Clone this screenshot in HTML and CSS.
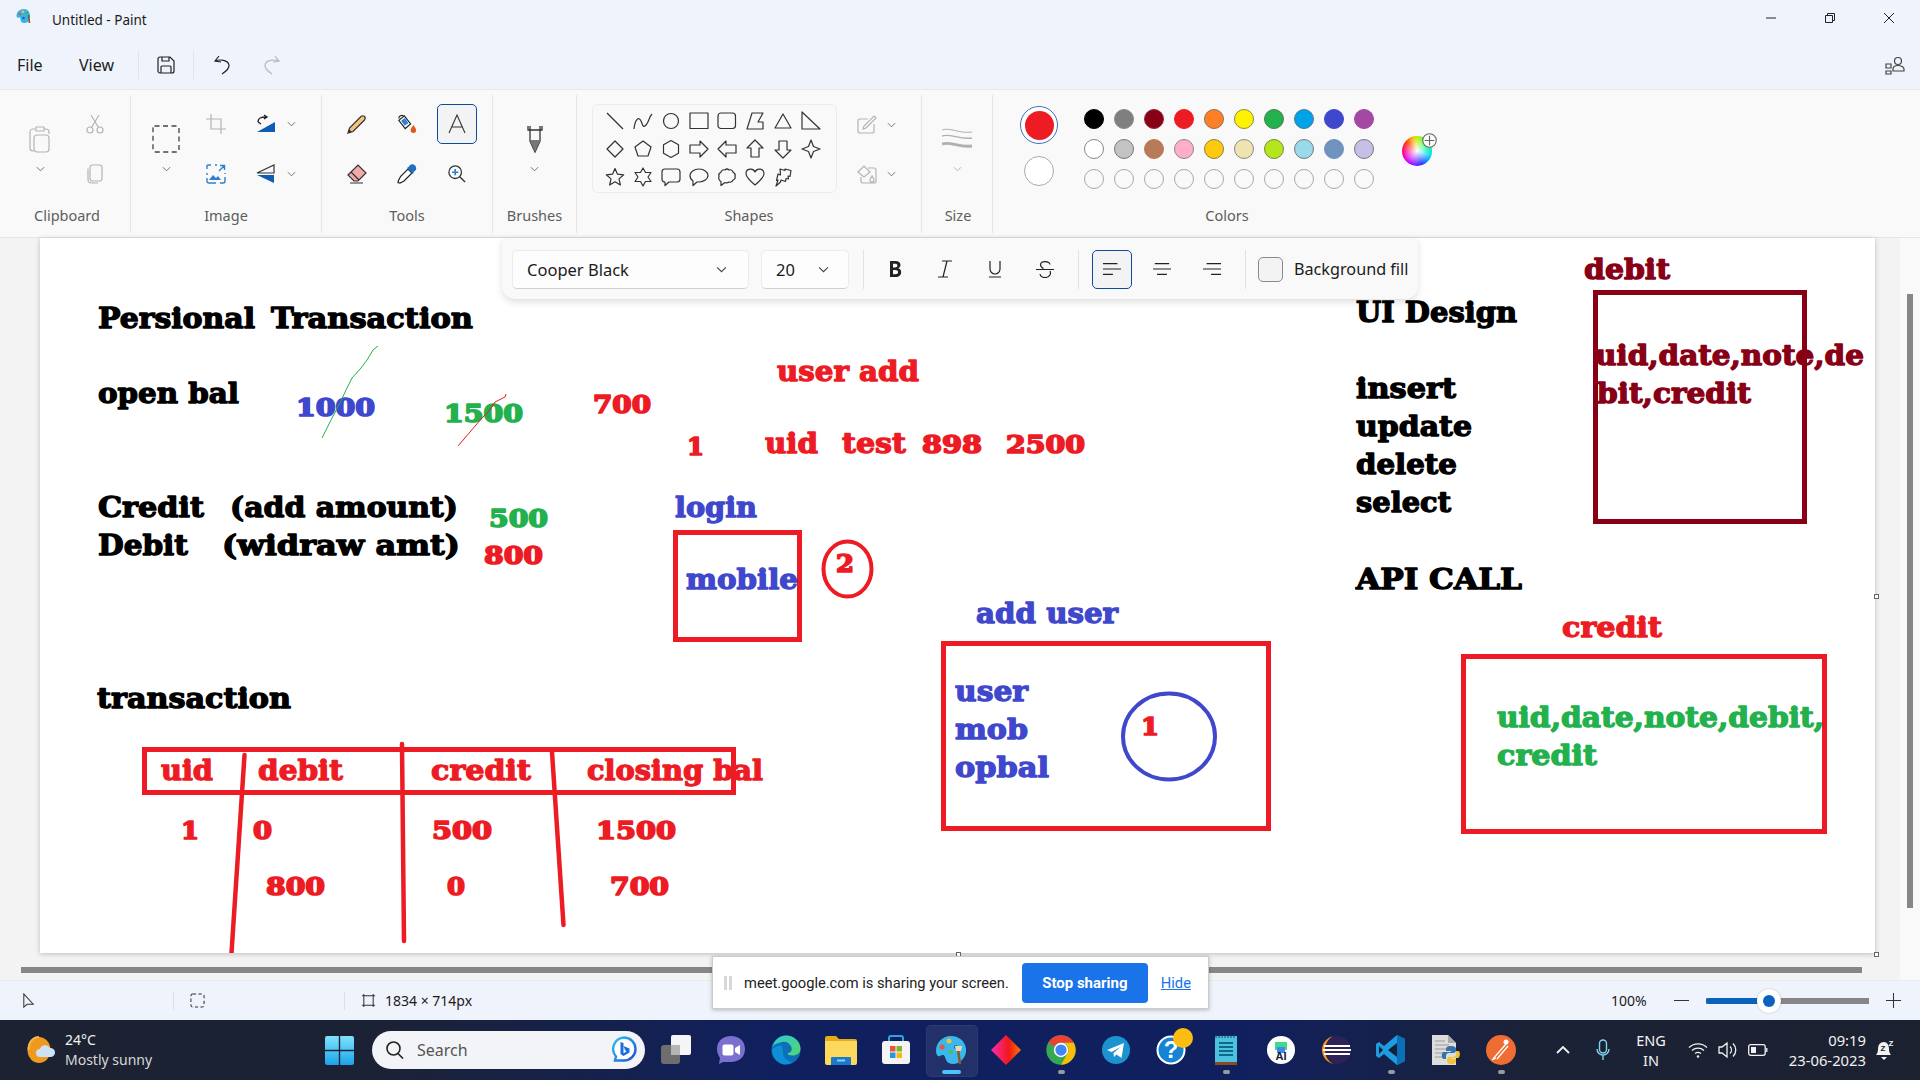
FILE: index.html
```html
<!DOCTYPE html>
<html lang="en">
<head>
<meta charset="utf-8">
<title>Untitled - Paint</title>
<link rel="stylesheet" href="styles.css">
</head>
<body>
<div class="app">
  <header class="titlebar">
    <svg class="applogo" viewBox="0 0 16 16"><path d="M8 1C3.500 1 .5 4 .5 8c0 1.500 1.500 2 2.500 1.500S4.500 10 4.500 11.500 5.500 15 8 15c3 0 5.500-2 6-5 .5-3-.5-9-6-9z" fill="#35b4e8"/><circle cx="4" cy="6" r="1.300" fill="#e8543a"/><circle cx="7" cy="3.800" r="1.300" fill="#f2c230"/><circle cx="11" cy="5" r="1.300" fill="#4caf50"/><circle cx="7.500" cy="10" r="1.300" fill="#2a5fb0"/><path d="M12.500 7l1 8" stroke="#8a5a2b" stroke-width="1.600"/></svg>
    <span class="apptitle">Untitled - Paint</span>
    <div class="winbtns">
      <svg class="winbtn" viewBox="0 0 12 12"><path d="M1 6h10"/></svg>
      <svg class="winbtn" viewBox="0 0 12 12"><path d="M1.500 3.500h7v7h-7zM3.500 3.500v-2h7v7h-2"/></svg>
      <svg class="winbtn" viewBox="0 0 12 12"><path d="M1 1l10 10M11 1L1 11"/></svg>
    </div>
  </header>
  <nav class="menubar">
    <span class="menu file">File</span>
    <span class="menu view">View</span>
    <i class="mbsep"></i>
    <svg class="mbicon save" viewBox="0 0 18 18"><path d="M1 3a2 2 0 0 1 2-2h10l4 4v10a2 2 0 0 1-2 2H3a2 2 0 0 1-2-2zM5 1v4h7V1M4 17v-6a1 1 0 0 1 1-1h8a1 1 0 0 1 1 1v6"/></svg>
    <i class="mbsep"></i>
    <svg class="mbicon undo" viewBox="0 0 18 20"><path d="M6 1L2 6l6 1M2 6c5-2 13-1 14 4 .5 3-4 7-7 9"/></svg>
    <svg class="mbicon redo" viewBox="0 0 18 20"><path d="M12 1l4 5-6 1M16 6C11 4 3 5 2 10c-.5 3 4 7 7 9"/></svg>
    <svg class="share" viewBox="0 0 20 20"><circle cx="13" cy="6" r="3.500"/><path d="M8 14c0-2 2-3.500 5-3.500s6 1.500 6 3.500v2H8zM1 9h5v4H1zM1 16h5v3H1z"/></svg>
  </nav>
  <section class="ribbon">
    <div class="group g-clip">
      <div class="gbody">
        <div class="stack rs2">
          <svg class="ic i22-28 dim" viewBox="0 0 22 28"><path d="M6 4H4a3 3 0 0 0-3 3v16a3 3 0 0 0 3 3h1M7 2h8v4H7zM15 4h2a3 3 0 0 1 3 3v2M8 10h9a3 3 0 0 1 3 3v11a3 3 0 0 1-3 3H8a3 3 0 0 1-3-3V13a3 3 0 0 1 3-3z"/></svg>
          <svg class="chev" viewBox="0 0 10 6"><path d="M1 1l4 4 4-4"/></svg>
        </div>
        <div class="cell"><svg class="ic dim i20" viewBox="0 0 20 20"><circle cx="5" cy="16" r="3"/><circle cx="15" cy="16" r="3"/><path d="M6.500 13.500L14 1M13.500 13.500L6 1"/></svg></div>
        <div class="cell"><svg class="ic dim i20" viewBox="0 0 20 20"><rect x="5" y="1" width="12" height="16" rx="2.500"/><path d="M3 4.500v11A3.500 3.500 0 0 0 6.500 19H13"/></svg></div>
      </div>
      <div class="glabel">Clipboard</div>
    </div>
    <div class="group g-image">
      <div class="gbody">
        <div class="stack rs2">
          <svg class="ic sel28" viewBox="0 0 28 28"><rect x="1" y="1" width="26" height="26" rx="1.500" stroke-dasharray="5 3.500"/></svg>
          <svg class="chev" viewBox="0 0 10 6"><path d="M1 1l4 4 4-4"/></svg>
        </div>
        <div class="cell"><svg class="ic dim i20" viewBox="0 0 20 20"><path d="M5 0v15h15M0 5h15v15"/></svg></div>
        <div class="cell wide"><svg class="i20" viewBox="0 0 20 20"><path d="M19 18H1L19 8z" fill="#0f5cb4"/><path d="M2 8c0-4 3-5 8-5M8 1l3 2-3 2M2 8l3 2" fill="none" stroke="#222" stroke-width="1.400"/></svg><svg class="chev side" viewBox="0 0 10 6"><path d="M1 1l4 4 4-4"/></svg></div>
        <div class="cell"><svg class="i20" viewBox="0 0 20 20"><path d="M1 5V2q0-1 1-1h3M9 1h2M1 9v2M19 13v4q0 2-2 2h-3M10 19H3q-2 0-2-2v-3M19 9v1M13 7l5-5M14 1.500h4.500V6" fill="none" stroke="#2f7fd0" stroke-width="1.400"/><path d="M3 16l4-5 3 3 2-2 3 4z" fill="#2f7fd0"/></svg></div>
        <div class="cell wide"><svg class="i20" viewBox="0 0 20 20"><path d="M18 9H1L18 1z" fill="none" stroke="#333" stroke-width="1.200"/><path d="M18 11H1l17 8z" fill="#0f5cb4"/></svg><svg class="chev side" viewBox="0 0 10 6"><path d="M1 1l4 4 4-4"/></svg></div>
      </div>
      <div class="glabel">Image</div>
    </div>
    <div class="group g-tools">
      <div class="gbody">
        <div class="cell"><svg class="i20" viewBox="0 0 20 20"><path d="M1 19l1.500-5L14 2.500q2-1.500 3.500 0t0 3.500L6 17.500z" fill="#f2c57c" stroke="#333" stroke-width="1.200"/><path d="M1 19l1.200-3.800 2.600 2.600z" fill="#333"/></svg></div>
        <div class="cell"><svg class="i20" viewBox="0 0 22 22"><path d="M2 7l6-5 7 9-6 5z" fill="#fff" stroke="#222" stroke-width="1.300"/><path d="M4.500 7.500l4-3 4 5.500-4 3z" fill="#2f7fd0"/><path d="M2 5c0-3 3-4 5-3" fill="none" stroke="#222" stroke-width="1.300"/><path d="M18 12c2 3 3 4 3 6a3 3 0 0 1-6 0c0-2 1-3 3-6z" fill="#e2571e"/></svg></div>
        <div class="cell selected"><svg class="glyphA" viewBox="0 0 20 20"><path d="M2 19L10 1l8 18M5 13h10"/></svg></div>
        <div class="cell"><svg class="i20" viewBox="0 0 20 20"><path d="M1 11L11 1l8 8-8 8H7z" fill="#f2a9a9" stroke="#333" stroke-width="1.200"/><path d="M4 8l8 8M3 19h13" fill="none" stroke="#333" stroke-width="1.200"/></svg></div>
        <div class="cell"><svg class="i20" viewBox="0 0 20 20"><path d="M11 5l4 4-8 8-4 2-2-.5.500-2 2-4z" fill="#fff" stroke="#222" stroke-width="1.200"/><path d="M10 4l6 6 1-2.500 1-.5q2.500-3 0-5.500t-5.500 0l-.5 1z" fill="#1f6fc4"/></svg></div>
        <div class="cell"><svg class="i20 sm" viewBox="0 0 20 20"><circle cx="8" cy="8" r="7" fill="none" stroke="#333" stroke-width="1.400"/><path d="M13 13l6 6" stroke="#333" stroke-width="1.500"/><path d="M8 4.500v7M4.500 8h7" stroke="#2f7fd0" stroke-width="1.800"/></svg></div>
      </div>
      <div class="glabel">Tools</div>
    </div>
    <div class="group g-brushes">
      <div class="gbody">
        <div class="stack">
          <svg class="brush" viewBox="0 0 16 28"><path d="M1 1v4h14V1M3 1v4M13 1v4M3 5v11l5 11 5-11V5" fill="none" stroke="#333" stroke-width="1.300"/><path d="M3 15h10v1l-5 11-5-11z" fill="#777"/></svg>
          <svg class="chev" viewBox="0 0 10 6"><path d="M1 1l4 4 4-4"/></svg>
        </div>
      </div>
      <div class="glabel">Brushes</div>
    </div>
    <div class="group g-shapes">
      <div class="gbody">
        <div class="shapebox">
          <svg class="shape" viewBox="0 0 20 20"><path d="M2 2l16 16"/></svg>
          <svg class="shape" viewBox="0 0 20 20"><path d="M1 18C2 8 6 5 8 10s2 7 5 4 3-8 6-11"/></svg>
          <svg class="shape" viewBox="0 0 20 20"><circle cx="10" cy="10" r="7.500"/></svg>
          <svg class="shape" viewBox="0 0 20 20"><rect x="1" y="2" width="18" height="15.500"/></svg>
          <svg class="shape" viewBox="0 0 20 20"><rect x="1" y="2" width="17.500" height="15.500" rx="3"/></svg>
          <svg class="shape" viewBox="0 0 20 20"><path d="M2 18L7 2h11l-5 9h5v7z"/></svg>
          <svg class="shape" viewBox="0 0 20 20"><path d="M10 3l8 14H2z"/></svg>
          <svg class="shape" viewBox="0 0 20 20"><path d="M1 1v17h18z"/></svg>
          <svg class="shape" viewBox="0 0 20 20"><path d="M10 2l8 8-8 8-8-8z"/></svg>
          <svg class="shape" viewBox="0 0 20 20"><path d="M10 2l8 6-3 9H5L2 8z"/></svg>
          <svg class="shape" viewBox="0 0 20 20"><path d="M10 1.500l7.500 4.300v8.400L10 18.500l-7.500-4.300V5.800z"/></svg>
          <svg class="shape" viewBox="0 0 20 20"><path d="M1 6h10V2l8 8-8 8v-4H1z"/></svg>
          <svg class="shape" viewBox="0 0 20 20"><path d="M19 6H9V2l-8 8 8 8v-4h10z"/></svg>
          <svg class="shape" viewBox="0 0 20 20"><path d="M10 1l8 8h-4v9H6V9H2z"/></svg>
          <svg class="shape" viewBox="0 0 20 20"><path d="M6 2h8v9h4l-8 8-8-8h4z"/></svg>
          <svg class="shape" viewBox="0 0 20 20"><path d="M10 1l2.500 6.500L19 10l-6.500 2.500L10 19l-2.500-6.500L1 10l6.500-2.500z"/></svg>
          <svg class="shape" viewBox="0 0 20 20"><path d="M10 1.500l2.500 5.700 6.200.6-4.700 4.100 1.400 6.100-5.400-3.200L4.600 18l1.400-6.100L1.300 7.800l6.200-.6z"/></svg>
          <svg class="shape" viewBox="0 0 20 20"><path d="M10 1l2.500 4.500H18L15 10l3 4.500h-5.500L10 19l-2.500-4.500H2L5 10 2 5.500h5.500z"/></svg>
          <svg class="shape" viewBox="0 0 20 20"><path d="M4 2h12q3 0 3 3v7q0 3-3 3H8l-4 3.500V15q-3 0-3-3V5q0-3 3-3z"/></svg>
          <svg class="shape" viewBox="0 0 20 20"><path d="M10 2c5 0 9 3 9 6.500S15 15 10 15H8l-4 3.500V14Q1 12 1 8.500C1 5 5 2 10 2z"/></svg>
          <svg class="shape" viewBox="0 0 20 20"><path d="M4 5q1-3 4-2 2-2 4 0 3-1 4 2 3 2 2 4 1 3-2 4-1 3-4 2-2 1.500-4 .5l-4 3v-4Q1 13 2 9 1 7 4 5z"/></svg>
          <svg class="shape" viewBox="0 0 20 20"><path d="M10 18C4 13 1 10 1 6.500 1 1.500 8 .5 10 5c2-4.500 9-3.500 9 1.500C19 10 16 13 10 18z"/></svg>
          <svg class="shape" viewBox="0 0 20 20"><path d="M7 2l5 1.500L12 2l6 1.500-1 6-2-.5.500 3-2.500-.5-.5 3L8 13l-.5 2L3 19l2-6-1.500.5L5 7l2.500 1z"/></svg>
        </div>
        <div class="shapeopts">
          <div class="optrow"><svg class="ic dim i20" viewBox="0 0 20 20"><path d="M17 9v7q0 2-2 2H3q-2 0-2-2V6q0-2 2-2h8M19 3L9 13l-3 1 1-3L17 1z"/></svg><svg class="chev side" viewBox="0 0 10 6"><path d="M1 1l4 4 4-4"/></svg></div>
          <div class="optrow"><svg class="ic dim i20" viewBox="0 0 20 20"><path d="M11 4h6q2 0 2 2v11q0 2-2 2H6q-2 0-2-2v-4M1 8l6-6 6 6-6 5zM15 12c1 2 2 3 2 4a2 2 0 0 1-4 0c0-1 1-2 2-4z"/></svg><svg class="chev side" viewBox="0 0 10 6"><path d="M1 1l4 4 4-4"/></svg></div>
        </div>
      </div>
      <div class="glabel">Shapes</div>
    </div>
    <div class="group g-size">
      <div class="gbody">
        <div class="stack">
          <svg class="sizeicon" viewBox="0 0 30 22"><path d="M0 2c8-3 18 4 30 2" stroke-width="1"/><path d="M0 8c8-3 18 4 30 2" stroke-width="1.500"/><path d="M0 16c8-3 18 4 30 2" stroke-width="3"/></svg>
          <svg class="chev" viewBox="0 0 10 6"><path d="M1 1l4 4 4-4"/></svg>
        </div>
      </div>
      <div class="glabel">Size</div>
    </div>
    <div class="group g-colors">
      <div class="gbody">
        <div class="actives">
          <div class="ring"><i class="primary"></i></div>
          <i class="secondary"></i>
        </div>
        <div class="palette">
          <i class="sw c1"></i><i class="sw c2"></i><i class="sw c3"></i><i class="sw c4"></i><i class="sw c5"></i><i class="sw c6"></i><i class="sw c7"></i><i class="sw c8"></i><i class="sw c9"></i><i class="sw c10"></i>
          <i class="sw c11"></i><i class="sw c12"></i><i class="sw c13"></i><i class="sw c14"></i><i class="sw c15"></i><i class="sw c16"></i><i class="sw c17"></i><i class="sw c18"></i><i class="sw c19"></i><i class="sw c20"></i>
          <i class="sw"></i><i class="sw"></i><i class="sw"></i><i class="sw"></i><i class="sw"></i><i class="sw"></i><i class="sw"></i><i class="sw"></i><i class="sw"></i><i class="sw"></i>
        </div>
        <div class="wheel"><svg class="wheelplus" viewBox="0 0 14 14"><circle cx="7" cy="7" r="6.300"/><path d="M7 2.500v9M2.500 7h9"/></svg></div>
      </div>
      <div class="glabel">Colors</div>
    </div>
  </section>
  <main class="workspace">
    <div class="leftpane">
      <div class="canvas">
        <svg class="drawing" viewBox="40 238 1835 715" width="1835" height="715">
          <text class="t k" x="98" y="327.500" textLength="157" lengthAdjust="spacingAndGlyphs">Persional</text>
          <text class="t k" x="271" y="327.500" textLength="202" lengthAdjust="spacingAndGlyphs">Transaction</text>
          <text class="t k" x="98" y="403" textLength="141" lengthAdjust="spacingAndGlyphs">open bal</text>
          <text class="t b n" x="296" y="416" textLength="79" lengthAdjust="spacingAndGlyphs">1000</text>
          <text class="t g n" x="444" y="422" textLength="79" lengthAdjust="spacingAndGlyphs">1500</text>
          <text class="t r n" x="593" y="413" textLength="58" lengthAdjust="spacingAndGlyphs">700</text>
          <text class="t k" x="98" y="517" textLength="106" lengthAdjust="spacingAndGlyphs">Credit</text>
          <text class="t k" x="230" y="517" textLength="228" lengthAdjust="spacingAndGlyphs">(add amount)</text>
          <text class="t k" x="98" y="555" textLength="90" lengthAdjust="spacingAndGlyphs">Debit</text>
          <text class="t k" x="222" y="555" textLength="238" lengthAdjust="spacingAndGlyphs">(widraw amt)</text>
          <text class="t g n" x="489" y="527" textLength="59" lengthAdjust="spacingAndGlyphs">500</text>
          <text class="t r n" x="484" y="564" textLength="59" lengthAdjust="spacingAndGlyphs">800</text>
          <path class="thin gs" d="M378 346L373 350 367 360 361 368 352 378 346 390 340 403 331 420 322 438"/>
          <path class="thin rs" d="M506 394L505 397 495 402 489 411 482 418 470 432 458 446"/>

          <text class="t r" x="777" y="381" textLength="142" lengthAdjust="spacingAndGlyphs">user add</text>
          <text class="t r n" x="687" y="455" textLength="17" lengthAdjust="spacingAndGlyphs">1</text>
          <text class="t r" x="765" y="453" textLength="53" lengthAdjust="spacingAndGlyphs">uid</text>
          <text class="t r" x="842" y="453" textLength="64" lengthAdjust="spacingAndGlyphs">test</text>
          <text class="t r n" x="922" y="453" textLength="60" lengthAdjust="spacingAndGlyphs">898</text>
          <text class="t r n" x="1006" y="453" textLength="79" lengthAdjust="spacingAndGlyphs">2500</text>
          <text class="t b" x="675" y="517" textLength="82" lengthAdjust="spacingAndGlyphs">login</text>
          <rect class="box rs" x="675.500" y="532.500" width="124" height="107"/>
          <text class="t b" x="686" y="589" textLength="112" lengthAdjust="spacingAndGlyphs">mobile</text>
          <ellipse class="oval rs" cx="847.500" cy="569" rx="24" ry="27.500"/>
          <text class="t r n" x="836" y="572" textLength="18" lengthAdjust="spacingAndGlyphs">2</text>
          <text class="t b" x="976" y="623" textLength="142" lengthAdjust="spacingAndGlyphs">add user</text>

          <rect class="box rs" x="943.500" y="643.500" width="325" height="185"/>
          <text class="t b" x="955" y="701" textLength="73" lengthAdjust="spacingAndGlyphs">user</text>
          <text class="t b" x="955" y="739" textLength="73" lengthAdjust="spacingAndGlyphs">mob</text>
          <text class="t b" x="955" y="777" textLength="94" lengthAdjust="spacingAndGlyphs">opbal</text>
          <ellipse class="oval bs" cx="1169" cy="736.500" rx="46" ry="43"/>
          <text class="t r n" x="1141" y="735" textLength="18" lengthAdjust="spacingAndGlyphs">1</text>

          <rect class="box rs" x="1463.500" y="656.500" width="361" height="175"/>
          <text class="t r" x="1562" y="637" textLength="100" lengthAdjust="spacingAndGlyphs">credit</text>
          <text class="t g" x="1497" y="727" textLength="327" lengthAdjust="spacingAndGlyphs">uid,date,note,debit,</text>
          <text class="t g" x="1497" y="765" textLength="100" lengthAdjust="spacingAndGlyphs">credit</text>

          <text class="t d" x="1584" y="279" textLength="86" lengthAdjust="spacingAndGlyphs">debit</text>
          <rect class="box ds" x="1595.500" y="292.500" width="209" height="229"/>
          <text class="t d" x="1595" y="365" textLength="269" lengthAdjust="spacingAndGlyphs">uid,date,note,de</text>
          <text class="t d" x="1597" y="403" textLength="154" lengthAdjust="spacingAndGlyphs">bit,credit</text>

          <text class="t k" x="1356" y="322" textLength="161" lengthAdjust="spacingAndGlyphs">UI Design</text>
          <text class="t k" x="1356" y="398" textLength="100" lengthAdjust="spacingAndGlyphs">insert</text>
          <text class="t k" x="1356" y="436" textLength="116" lengthAdjust="spacingAndGlyphs">update</text>
          <text class="t k" x="1356" y="474" textLength="101" lengthAdjust="spacingAndGlyphs">delete</text>
          <text class="t k" x="1356" y="512" textLength="95" lengthAdjust="spacingAndGlyphs">select</text>
          <text class="t k" x="1356" y="589" textLength="166" lengthAdjust="spacingAndGlyphs">API CALL</text>

          <text class="t k" x="97" y="708" textLength="194" lengthAdjust="spacingAndGlyphs">transaction</text>
          <rect class="box rs" x="144.500" y="749.500" width="589" height="43"/>
          <text class="t r" x="161" y="780" textLength="52" lengthAdjust="spacingAndGlyphs">uid</text>
          <text class="t r" x="258" y="780" textLength="85" lengthAdjust="spacingAndGlyphs">debit</text>
          <text class="t r" x="431" y="780" textLength="100" lengthAdjust="spacingAndGlyphs">credit</text>
          <text class="t r" x="587" y="780" textLength="176" lengthAdjust="spacingAndGlyphs">closing bal</text>
          <path class="rule rs" d="M244.500 755L231.500 953"/>
          <path class="rule rs" d="M402 744L404 941"/>
          <path class="rule rs" d="M552 752L563.500 925"/>
          <text class="t r n" x="181" y="838.500" textLength="18" lengthAdjust="spacingAndGlyphs">1</text>
          <text class="t r n" x="253" y="838.500" textLength="19" lengthAdjust="spacingAndGlyphs">0</text>
          <text class="t r n" x="432" y="838.500" textLength="60" lengthAdjust="spacingAndGlyphs">500</text>
          <text class="t r n" x="596" y="838.500" textLength="80" lengthAdjust="spacingAndGlyphs">1500</text>
          <text class="t r n" x="266" y="895" textLength="59" lengthAdjust="spacingAndGlyphs">800</text>
          <text class="t r n" x="447" y="895" textLength="18" lengthAdjust="spacingAndGlyphs">0</text>
          <text class="t r n" x="610" y="895" textLength="59" lengthAdjust="spacingAndGlyphs">700</text>
        </svg>
        <i class="handle h-right"></i>
        <i class="handle h-bottom"></i>
        <i class="handle h-corner"></i>
      </div>
      <div class="hscroll"></div>
    </div>
    <div class="rightpane"><div class="vscroll"></div></div>

    <div class="textbar">
      <div class="select fontsel"><span>Cooper Black</span><svg class="chev dark" viewBox="0 0 10 6"><path d="M1 1l4 4 4-4"/></svg></div>
      <div class="select sizesel"><span>20</span><svg class="chev dark" viewBox="0 0 10 6"><path d="M1 1l4 4 4-4"/></svg></div>
      <i class="tbsep"></i>
      <div class="tbbtn"><svg class="tbi" viewBox="0 0 16 18"><path class="solid" d="M3 1h5.500c3 0 5 1.300 5 4 0 1.600-1 2.800-2.300 3.300 1.800.4 3 1.800 3 3.700 0 3-2.300 5-5.500 5H3zM6 3.700v3.700h2c1.500 0 2.400-.7 2.400-1.900S9.500 3.700 8 3.700zM6 10v4.300h2.300c1.800 0 2.800-.8 2.800-2.200S10 10 8.200 10z"/></svg></div>
      <div class="tbbtn"><svg class="tbi" viewBox="0 0 16 18"><path d="M5 1h10M1 17h10M10 1L6 17"/></svg></div>
      <div class="tbbtn"><svg class="tbi" viewBox="0 0 16 18"><path d="M3 1v8a5 5 0 0 0 10 0V1M2 17h12"/></svg></div>
      <div class="tbbtn"><svg class="tbi" viewBox="0 0 18 18"><path d="M14 4.500C13.500 1 4.500.5 4.500 4.500c0 1.500 1 3 3 4M0 9.500h18M14 11c1 2 .5 6.500-5 6.500-3 0-4.500-1-5-3.500"/></svg></div>
      <i class="tbsep"></i>
      <div class="tbbtn active"><svg class="tbi" viewBox="0 0 20 14"><path d="M0 1h16M0 7h20M0 13h11"/></svg></div>
      <div class="tbbtn"><svg class="tbi" viewBox="0 0 20 14"><path d="M2 1h16M0 7h20M4.500 13h11"/></svg></div>
      <div class="tbbtn"><svg class="tbi" viewBox="0 0 20 14"><path d="M4 1h16M0 7h20M9 13h11"/></svg></div>
      <i class="tbsep"></i>
      <i class="checkbox"></i>
      <span class="bgfill">Background fill</span>
    </div>

    <div class="sharebar">
      <i class="grip"></i>
      <span class="sharetext">meet.google.com is sharing your screen.</span>
      <span class="stopbtn">Stop sharing</span>
      <span class="hidelink">Hide</span>
    </div>
  </main>
  <footer class="statusbar">
    <div class="stsec s1"><svg class="sti" viewBox="0 0 12 16"><path d="M1 1v14l3.500-3H11z"/></svg></div>
    <div class="stsec s2"><svg class="sti" viewBox="0 0 16 16"><rect x="1" y="1" width="14" height="14" rx="2" stroke-dasharray="3.500 2.500"/></svg></div>
    <div class="stsec s3"><svg class="sti" viewBox="0 0 16 16"><path d="M3 1v14M13 1v14M1 3h14M1 13h14"/></svg><span>1834 × 714px</span></div>
    <div class="zoomctl">
      <span class="zoompct">100%</span>
      <svg class="zbtn zminus" viewBox="0 0 16 16"><path d="M0 8h16"/></svg>
      <div class="slider"><i class="track"></i><i class="knob"></i></div>
      <svg class="zbtn zplus" viewBox="0 0 16 16"><path d="M0 8h16M8 0v16"/></svg>
    </div>
  </footer>
  <div class="taskbar">
    <div class="weather">
      <svg class="wicon" viewBox="0 0 28 28"><ellipse cx="12" cy="14" rx="11.500" ry="13" fill="#ee9a1e"/><path d="M1.500 14C1.500 6 6 1 12 1" fill="none" stroke="#f5b84a" stroke-width="2"/><path d="M13 21a4 4 0 0 1 0-8 5.500 5.500 0 0 1 10-1 4.500 4.500 0 0 1 1 9z" fill="#cfe1f5"/></svg>
      <div class="wtext"><div class="wtemp">24°C</div><div class="wdesc">Mostly sunny</div></div>
    </div>
    <div class="startcell"><svg class="winlogo" viewBox="0 0 29 29"><defs><linearGradient id="wl" x1="0" y1="0" x2="0" y2="1"><stop offset="0" stop-color="#7fe3fb"/><stop offset="1" stop-color="#1aa3ea"/></linearGradient></defs><path fill="url(#wl)" d="M0 2q0-2 2-2h11.800v13.800H0zM15.200 0H27q2 0 2 2v11.800H15.200zM0 15.200h13.800V29H2q-2 0-2-2zM15.200 15.200H29V27q0 2-2 2H15.200z"/></svg></div>
    <div class="search">
      <svg class="searchi" viewBox="0 0 18 18"><circle cx="7.500" cy="7.500" r="6.500"/><path d="M12 12.500l5 5"/></svg>
      <span>Search</span>
      <svg class="bing" viewBox="0 0 26 28"><defs><linearGradient id="bg1" x1="0" y1="0" x2="1" y2="1"><stop offset="0" stop-color="#36c3f0"/><stop offset="1" stop-color="#1b4fd8"/></linearGradient></defs><path d="M13 1.500A11.500 11.500 0 0 1 13 24.500H4l1-4A11.500 11.500 0 0 1 13 1.500z" fill="#fff" stroke="url(#bg1)" stroke-width="2.400"/><path d="M9.500 6v12l3 2 6-3.500v-4l-6-2.500 1.500 4 1.500 1.500-3 1.800V7z" fill="#1a6fe0"/></svg>
    </div>
    <div class="apps">
      <div class="app-cell"><svg class="appi" viewBox="0 0 30 30"><rect x="0" y="10" width="19" height="19" rx="3" fill="#6e6e6e"/><rect x="10" y="0" width="20" height="20" rx="2" fill="#f5f5f5"/><rect x="10" y="10" width="9" height="10" fill="#b5b5b5"/></svg></div>
      <div class="app-cell"><svg class="appi" viewBox="0 0 30 30"><path d="M15 1c8 0 14 5 14 13s-6 13-14 13H7l-4 2 1-6C2 20 1 17 1 14 1 6 7 1 15 1z" fill="#7b6fd0"/><rect x="6.500" y="9.500" width="11" height="11" rx="2" fill="#fff"/><path d="M19 13l5-3v10l-5-3z" fill="#fff"/></svg></div>
      <div class="app-cell"><svg class="appi" viewBox="0 0 30 30"><defs><linearGradient id="eg" x1="0" y1="0" x2="1" y2="1"><stop offset="0" stop-color="#2fc7d8"/><stop offset="1" stop-color="#55d66b"/></linearGradient></defs><circle cx="15" cy="15" r="14.500" fill="#0c6fb8"/><path d="M1 13C3 5 9 .5 15 .5c8 0 14.500 6 14.500 13 0 5-4 7-8 7-3 0-5-1-5-2 3-1 5-3 4-6C19 8 15 6 11 7 6 8 2 10 1 13z" fill="url(#eg)"/><path d="M12 15c-1 6 3 11 9 12-2 1.500-4 2.500-7 2.500C8 29.500 1 23 1 15c2-3 6-5 10-4z" fill="#0d8fd8"/></svg></div>
      <div class="app-cell"><svg class="appi wide32" viewBox="0 0 32 30"><path d="M0 3q0-2 2-2h9l3 3h16q2 0 2 2v4H0z" fill="#e9a91b"/><path d="M0 6h32v22q0 2-2 2H2q-2 0-2-2z" fill="#fcd85c"/><path d="M7 22h18q1 0 1 1v7H6v-7q0-1 1-1z" fill="#1d79c9"/><rect x="12" y="24.500" width="8" height="2" fill="#8fd0f5"/></svg></div>
      <div class="app-cell"><svg class="appi" viewBox="0 0 30 30"><path d="M8 6V3q0-2 2-2h10q2 0 2 2v3" fill="none" stroke="#28a7e8" stroke-width="2"/><rect x="1" y="6" width="28" height="23" rx="3" fill="#f4f4f4"/><rect x="9" y="11" width="5.500" height="5.500" fill="#e8543a"/><rect x="15.500" y="11" width="5.500" height="5.500" fill="#7cb72f"/><rect x="9" y="17.500" width="5.500" height="5.500" fill="#1f9be0"/><rect x="15.500" y="17.500" width="5.500" height="5.500" fill="#f5b91d"/></svg></div>
      <div class="app-cell on"><svg class="appi" viewBox="0 0 30 30"><path d="M15 1C6 1 0 8 0 16c0 4 2 6 4 5s4-2 5 1 2 7 8 7c7 0 12-6 13-12C31 9 25 1 15 1z" fill="#3ab7ec"/><circle cx="6" cy="12" r="2.500" fill="#e8543a"/><circle cx="13" cy="6" r="2.500" fill="#f2c230"/><circle cx="20" cy="12" r="2" fill="#2a5fb0"/><circle cx="15" cy="17" r="2" fill="#5dbb46"/><path d="M22 14l2 15" stroke="#8a5a2b" stroke-width="2.500"/><path d="M19 11h7l-1 5h-5z" fill="#e9d9b0"/></svg><i class="ind blue"></i></div>
      <div class="app-cell"><svg class="appi" viewBox="0 0 30 30"><defs><linearGradient id="dg" x1="0" y1="0" x2="1" y2="0"><stop offset="0" stop-color="#ff2bb0"/><stop offset=".6" stop-color="#f01818"/><stop offset="1" stop-color="#ff7a00"/></linearGradient></defs><path d="M15 0l15 15-15 15L0 15z" fill="url(#dg)"/></svg></div>
      <div class="app-cell"><svg class="appi" viewBox="0 0 48 48"><circle cx="24" cy="24" r="23.500" fill="#34a853"/><path d="M3.600 12.300A23.500 23.500 0 0 1 44.400 12.300H24A11.700 11.700 0 0 0 13.800 18.100z" fill="#ea4335"/><path d="M44.400 12.300A23.500 23.500 0 0 1 24 47.500L34.200 29.900A11.700 11.700 0 0 0 34.200 18.100 11.700 11.700 0 0 0 24 12.300z" fill="#fbbc05"/><circle cx="24" cy="24" r="11.500" fill="#fff"/><circle cx="24" cy="24" r="9" fill="#4285f4"/></svg><i class="ind"></i></div>
      <div class="app-cell"><svg class="appi" viewBox="0 0 30 30"><circle cx="15" cy="15" r="14" fill="#1c93d1"/><path d="M6 15l17-7-2.500 15-5-3.500-2.500 2.500-.5-4 7-6-9 5z" fill="#fff"/></svg></div>
      <div class="app-cell"><svg class="appi" viewBox="0 0 30 30"><circle cx="15" cy="15" r="13.500" fill="#1584d4" stroke="#fff" stroke-width="2"/><text class="qmark" x="15" y="23" text-anchor="middle">?</text></svg><i class="badge"></i></div>
      <div class="app-cell"><svg class="appi narrow" viewBox="0 0 22 30"><rect x="0" y="1" width="22" height="29" fill="#4ec1dd"/><rect y="27" width="22" height="3" fill="#8a4a22"/><path d="M1 0v3M4 0v3M7 0v3M10 0v3M13 0v3M16 0v3M19 0v3" stroke="#1a4a6a" stroke-width="1"/><path d="M4 8h14M4 12h14M4 16h14M4 20h14" stroke="#0c6a8c" stroke-width="2"/></svg><i class="ind"></i></div>
      <div class="app-cell"><svg class="appi" viewBox="0 0 30 30"><circle cx="15" cy="15" r="14" fill="#fff"/><path d="M9 7h12v8H9z" fill="#3ddc84"/><path d="M11 12h8v6h-8z" fill="#4285f4"/><text class="ailabel" x="15" y="25" text-anchor="middle">AI</text></svg></div>
      <div class="app-cell"><svg class="appi" viewBox="0 0 30 30"><circle cx="16" cy="15" r="14" fill="#2c2255"/><path d="M12 1C5 3 1 9 1 15s4 12 11 14C7 26 4 21 4 15S7 4 12 1z" fill="#f7941e"/><path d="M3 11h26M2 15h28M3 19h26" stroke="#fff" stroke-width="2"/></svg></div>
      <div class="app-cell"><svg class="appi" viewBox="0 0 30 30"><path d="M21 0l8 4v22l-8 4-13-11-5 4-3-2V9l3-2 5 4z" fill="#1f9ce0"/><path d="M21 0l8 4v22l-8 4z" fill="#0b6fb8"/><path d="M21 8v14l-9-7z" fill="#11213a"/><path d="M3 11l4 4-4 4z" fill="#11213a"/></svg><i class="ind"></i></div>
      <div class="app-cell"><svg class="appi" viewBox="0 0 30 30"><path d="M1 0h16l8 8v22H1z" fill="#ddd"/><path d="M17 0v8h8z" fill="#aaa"/><path d="M4 6h10M4 10h14M4 14h14M4 18h10M4 22h10" stroke="#999" stroke-width="1"/><path d="M20 11c-4 0-5 1-5 4v1h5v1h-7c-3 0-3 7 0 7h2v-3c0-2 1-3 3-3h4c2 0 3-1 3-3v-1c0-2-2-3-5-3z" fill="#3572a5"/><path d="M20 29c4 0 5-1 5-3v-2h-5v-1h7c2 0 3-7 0-7h-2v3c0 2-1 3-3 3h-4c-1 0-2 1-2 3v1c0 2 2 3 4 3z" fill="#f2c230"/></svg></div>
      <div class="app-cell"><svg class="appi" viewBox="0 0 30 30"><circle cx="15" cy="15" r="15" fill="#ef6c33"/><circle cx="20" cy="7" r="2.500" fill="#fff"/><path d="M7 24L20 9M11 24l11-13M6 25l4-2" stroke="#fff" stroke-width="1.300" fill="none"/></svg><i class="ind"></i></div>
    </div>
    <div class="tray">
      <div class="tcell up"><svg class="ti" viewBox="0 0 14 8"><path d="M1 7l6-6 6 6"/></svg></div>
      <div class="tcell mic"><svg class="ti micicon" viewBox="0 0 14 22"><rect x="3.500" y="1" width="7" height="13" rx="3.500"/><path d="M1 10a6 6 0 0 0 12 0M7 16v5"/></svg></div>
      <div class="lang"><div>ENG</div><div>IN</div></div>
      <div class="sys">
        <div class="scell"><svg class="ti wf" viewBox="0 0 20 16"><path d="M1 5.500a13 13 0 0 1 18 0M4 8.500a9 9 0 0 1 12 0M7 11.500a5 5 0 0 1 6 0"/><circle class="dot" cx="10" cy="14.500" r="1.200"/></svg></div>
        <div class="scell"><svg class="ti wf" viewBox="0 0 20 18"><path d="M1 6h3l5-4v14l-5-4H1zM12 5.500a5 5 0 0 1 0 7M15 2.500a9 9 0 0 1 0 13"/></svg></div>
        <div class="scell"><svg class="ti wf" viewBox="0 0 20 12"><rect x=".7" y=".7" width="16.500" height="10.600" rx="2"/><path class="solid" d="M3 3h5v6H3z"/><path d="M18.800 4v4"/></svg></div>
      </div>
      <div class="clock"><div>09:19</div><div>23-06-2023</div></div>
      <div class="tcell bell"><svg class="ti bellicon" viewBox="0 0 20 22"><path class="solid" d="M9 3c-4 0-6 3-6 7 0 3-1 5-2 6h15c-1-1-2-3-2-6 0-4-2-7-5-7zM6 18h6l-3 3z"/><text class="zz" x="5.500" y="12">Z</text><text class="zz sky" x="13.500" y="7">Z</text></svg></div>
    </div>
  </div>
</div>
</body>
</html>
```
FILE: styles.css
```css
* { box-sizing: border-box; }
html, body { margin: 0; padding: 0; height: 100%; overflow: hidden; }
body { font-family: "Noto Sans", "Open Sans", sans-serif; color: #1b1b1b; }
i { display: block; font-style: normal; }
svg { display: block; flex: none; }

.app { width: 1920px; height: 1080px; display: flex; flex-direction: column; background: #f3f3f3; }

/* Title bar */
.titlebar { height: 44px; flex: none; background: #eff3fb; display: flex; align-items: center; padding-left: 16px; position: relative; }
.applogo { width: 16px; height: 16px; margin-top: -13px; }
.apptitle { margin-left: 20px; font-size: 13.500px; margin-top: -5px; }
.winbtns { margin-left: auto; display: flex; margin-top: -8px; }
.winbtn { width: 12px; height: 12px; margin: 0 22px 0 24px; fill: none; stroke: #222; stroke-width: 1; }
.winbtn:nth-child(1) { margin-right: 23px; }
.winbtn:nth-child(2) { margin-right: 23px; }
.winbtn:nth-child(3) { margin-right: 25px; }

/* Menu */
.menubar { height: 45px; flex: none; background: #eff3fb; display: flex; align-items: center; padding: 0 0 3px 17px; }
.menu { font-size: 16px; }
.menu.file { width: 62px; }
.menu.view { width: 59px; }
.mbsep { width: 1px; height: 28px; background: #dfe3ea; }
.mbicon { fill: none; stroke: #222; stroke-width: 1.200; }
.save { width: 18px; height: 18px; margin-left: 18px; margin-right: 18px; }
.undo { width: 18px; height: 20px; margin-left: 19px; }
.redo { width: 18px; height: 20px; margin-left: 32px; stroke: #b8b8b8; }
.share { width: 20px; height: 20px; margin-left: auto; margin-right: 15px; fill: none; stroke: #444; stroke-width: 1.200; }

/* Ribbon */
.ribbon { height: 149px; flex: none; background: #f9f9f9; border-top: 1px solid #e8e8e8; border-bottom: 1px solid #e5e5e5; display: flex; padding-top: 5px; padding-bottom: 4px; }
.group { display: flex; flex-direction: column; border-right: 1px solid #e5e5e5; height: 138px; flex: none; }
.gbody { height: 111px; flex: none; padding-top: 9px; }
.glabel { height: 18px; line-height: 18px; text-align: center; font-size: 14.500px; color: #5d5d5d; }
.g-clip { width: 131px; }
.g-clip .glabel { padding-left: 4px; }
.g-image { width: 191px; }
.g-tools { width: 171px; }
.g-brushes { width: 84px; }
.g-shapes { width: 345px; }
.g-size { width: 71px; }
.g-size .glabel { padding-left: 2px; }
.g-colors { width: 468px; border-right: 0; }

.g-clip .gbody { display: grid; grid-template-columns: 60px 50px; grid-template-rows: 40px 40px; row-gap: 10px; padding-left: 10px; }
.g-image .gbody { display: grid; grid-template-columns: 40px 40px 60px; grid-template-rows: 40px 40px; gap: 10px; padding-left: 15px; }
.g-tools .gbody { display: grid; grid-template-columns: 40px 40px 40px; grid-template-rows: 40px 40px; gap: 10px; padding-left: 15px; }
.g-brushes .gbody { display: flex; justify-content: center; }
.g-size .gbody { display: flex; justify-content: center; }
.g-shapes .gbody { display: flex; padding-left: 15px; }
.g-colors .gbody { display: flex; padding-top: 0; padding-left: 27px; }

.cell { display: flex; align-items: center; justify-content: center; position: relative; }
.cell.wide { justify-content: flex-start; padding-left: 10px; }
.cell.selected { border: 1.500px solid #0f4a9e; border-radius: 5px; background: #f3f3f3; }
.rs2 { grid-row: span 2; }
.stack { display: flex; flex-direction: column; align-items: center; height: 90px; padding-top: 21px; }
.stack .chev { margin-top: 13px; }
.ic { fill: none; stroke: #555; stroke-width: 1.200; }
.dim { stroke: #b4b4b4; }
.i20 { width: 20px; height: 20px; }
.i20.sm { width: 18px; height: 18px; }
.i22-28 { width: 22px; height: 28px; }
.sel28 { width: 28px; height: 28px; stroke: #444; stroke-width: 1.300; }
.chev { width: 9px; height: 6px; fill: none; stroke: #666; stroke-width: 1; }
.chev.side { margin-left: 6px; }
.g-image .chev.side { margin-left: 11px; }
.chev.dark { width: 11px; height: 7px; stroke: #444; }
.glyphA { width: 20px; height: 20px; fill: none; stroke: #333; stroke-width: 1.100; }
.brush { width: 16px; height: 28px; }
.sizeicon { width: 30px; height: 22px; fill: none; stroke: #b0b0b0; }
.g-size .stack { padding-top: 24px; }
.g-size .stack .chev { margin-top: 16px; stroke: #b0b0b0; }

.shapebox { width: 245px; height: 89px; border: 1px solid #ececec; border-radius: 6px; padding: 2px 0 0 8px; display: grid; grid-template-columns: repeat(8, 28px); grid-auto-rows: 28px; justify-items: center; align-items: center; }
.shape { width: 20px; height: 20px; fill: none; stroke: #333; stroke-width: 1.200; stroke-linejoin: round; }
.shapeopts { margin-left: 20px; display: flex; flex-direction: column; gap: 29px; padding-top: 11px; }
.optrow { display: flex; align-items: center; height: 20px; }
.optrow .chev { margin-left: 10px; }

.actives { display: flex; flex-direction: column; align-items: center; padding-top: 11px; gap: 12px; }
.ring { width: 38px; height: 38px; border: 1.500px solid #3f6fb5; border-radius: 50%; display: flex; align-items: center; justify-content: center; background: #fff; }
.primary { width: 29px; height: 29px; border-radius: 50%; background: #ed1c24; }
.secondary { width: 30px; height: 30px; border-radius: 50%; background: #fff; border: 1.500px solid #aaa; }
.palette { margin-left: 26px; padding-top: 14px; display: grid; grid-template-columns: repeat(10, 20px); grid-auto-rows: 20px; gap: 10px; }
.sw { width: 20px; height: 20px; border-radius: 50%; border: 1.300px solid #a8a8a8; }
.c1 { background: #000; border-color: #000; } .c2 { background: #7f7f7f; border-color: #888; } .c3 { background: #880015; border-color: #8a2a36; } .c4 { background: #ed1c24; border-color: #ed1c24; }
.c5 { background: #ff7f27; border-color: #8d7050; } .c6 { background: #fff200; border-color: #8d8a40; } .c7 { background: #22b14c; border-color: #507a5a; } .c8 { background: #00a2e8; border-color: #507a90; }
.c9 { background: #3f48cc; border-color: #3f48cc; } .c10 { background: #a349a4; border-color: #a349a4; }
.c11 { background: #fff; border-color: #888; } .c12 { background: #c3c3c3; border-color: #777; } .c13 { background: #b97a57; border-color: #b97a57; } .c14 { background: #ffaec9; border-color: #888; }
.c15 { background: #ffc90e; border-color: #8d8040; } .c16 { background: #efe4b0; border-color: #888; } .c17 { background: #b5e61d; border-color: #778a40; } .c18 { background: #99d9ea; border-color: #778; }
.c19 { background: #7092be; border-color: #7092be; } .c20 { background: #c8bfe7; border-color: #777; }
.wheel { width: 30px; height: 30px; margin: 41px 0 0 28px; border-radius: 50%; position: relative; background: radial-gradient(circle, #fff 0, rgba(255,255,255,0) 68%), conic-gradient(#b8f000, #00ff66 60deg, #00d8ff 110deg, #2030ff 160deg, #d000ff 220deg, #ff0080 270deg, #ff3000 310deg, #ffb000 340deg, #b8f000); }
.wheelplus { position: absolute; left: 19.500px; top: -3.500px; width: 15px; height: 15px; fill: #f9f9f9; stroke: #666; stroke-width: 1; }

/* Workspace */
.workspace { flex: 1; min-height: 0; display: grid; grid-template-columns: 1900px 20px; position: relative; background: #f3f3f3; }
.leftpane { display: flex; flex-direction: column; }
.canvas { width: 1835px; height: 715px; margin-left: 40px; background: #fff; position: relative; box-shadow: 0 1px 5px rgba(0,0,0,.22); }
.drawing { display: block; }
.hscroll { width: 1841px; height: 6px; background: #868686; margin: 14px 0 0 21px; }
.rightpane { background: #f9f9f9; padding: 56px 0 0 7px; }
.vscroll { width: 6px; height: 614px; background: #868686; }
.handle { position: absolute; width: 5px; height: 5px; background: #fff; border: 1px solid #666; }
.h-right { left: 1834px; top: 356px; }
.h-bottom { left: 916px; top: 714px; }
.h-corner { left: 1834px; top: 714px; }

.t { font-family: "DejaVu Serif", "Liberation Serif", serif; font-weight: 700; font-size: 28px; white-space: pre; stroke-width: 1.300px; stroke-linejoin: round; }
.n { font-size: 24px; stroke-width: 1.700px; }
.k { fill: #000; stroke: #000; }
.r { fill: #ed1c24; stroke: #ed1c24; }
.b { fill: #3f48cc; stroke: #3f48cc; }
.g { fill: #22b14c; stroke: #22b14c; }
.d { fill: #880015; stroke: #880015; }
.box { fill: none; stroke-width: 5; }
.oval { fill: none; stroke-width: 4; }
.rule { fill: none; stroke-width: 4.500; stroke-linecap: round; }
.thin { fill: none; stroke-width: 1; }
.rs { stroke: #ed1c24; } .bs { stroke: #3f48cc; } .gs { stroke: #22b14c; } .ds { stroke: #880015; }

/* Text toolbar */
.textbar { position: absolute; left: 502px; top: 1px; width: 916px; height: 60px; background: #f9f9f9; border-radius: 0 0 13px 13px; box-shadow: 0 3px 7px rgba(0,0,0,.13); display: flex; align-items: center; padding-left: 10px; }
.select { height: 39px; background: #fdfdfd; border: 1px solid #ececec; border-bottom-color: #d0d0d0; border-radius: 5px; display: flex; align-items: center; font-size: 16.500px; justify-content: space-between; }
.fontsel { width: 237px; padding: 0 21px 0 14px; }
.sizesel { width: 88px; margin-left: 12px; padding: 0 19px 0 14px; }
.tbsep { width: 1px; height: 39px; background: #e2e2e2; margin: 0 13px 0 3px; }
.sizesel + .tbsep { margin-left: 14px; margin-right: 11px; }
.tbbtn { width: 40px; height: 39px; display: flex; align-items: center; justify-content: center; margin-right: 10px; border-radius: 5px; }
.tbbtn.active { border: 1.500px solid #0f4a9e; background: #f3f3f3; }
.tbi { width: 18px; height: 18px; fill: none; stroke: #222; stroke-width: 1.200; }
.solid { fill: #222; stroke: none; }
.checkbox { width: 25px; height: 25px; border: 1px solid #8a8a8a; border-radius: 5px; background: #f3f3f3; margin-left: -1px; }
.bgfill { margin-left: 11px; font-size: 16.200px; white-space: nowrap; }

/* Share banner */
.sharebar { position: absolute; left: 712px; top: 718px; width: 497px; height: 53px; background: #fff; border: 1px solid #ccc; box-shadow: 0 1px 4px rgba(0,0,0,.25); display: flex; align-items: center; font-family: Roboto, sans-serif; z-index: 3; }
.grip { width: 8px; height: 14px; margin-left: 11px; border-left: 3px solid #d8d8d8; border-right: 3px solid #d8d8d8; }
.sharetext { margin-left: 12px; font-size: 14.700px; color: #222; white-space: nowrap; }
.stopbtn { margin-left: 13px; width: 126px; height: 40px; background: #1a73e8; color: #fff; border-radius: 4px; font-size: 15px; font-weight: 700; display: flex; align-items: center; justify-content: center; flex: none; }
.hidelink { margin-left: 13px; font-size: 14.700px; color: #1a73e8; text-decoration: underline; }

/* Status */
.statusbar { height: 40px; flex: none; background: #eff3fb; border-top: 1px solid #e8eaef; display: flex; align-items: center; font-size: 14px; }
.stsec { height: 18px; display: flex; align-items: center; border-right: 1px solid #dcdfe6; }
.s1 { width: 174px; padding-left: 21px; }
.s2 { width: 171px; padding-left: 16px; }
.s3 { border-right: 0; padding-left: 16px; }
.s3 span { margin-left: 9px; }
.sti { width: 15px; height: 15px; fill: none; stroke: #333; stroke-width: 1.100; }
.zoomctl { margin-left: auto; display: flex; align-items: center; padding-right: 19px; }
.zoompct { width: 63px; }
.zbtn { width: 15px; height: 15px; fill: none; stroke: #333; stroke-width: 1.100; }
.slider { width: 163px; height: 24px; margin: 0 17px; position: relative; background: linear-gradient(#868686, #868686) center / 100% 6px no-repeat; border-radius: 3px; }
.track { position: absolute; left: 0; top: 9px; width: 63px; height: 6px; background: #0b62bd; border-radius: 3px 0 0 3px; }
.knob { position: absolute; left: 51px; top: 0; width: 24px; height: 24px; border-radius: 50%; background: #fff; box-shadow: 0 0 2px rgba(0,0,0,.25); }
.knob::after { content: ""; position: absolute; left: 6px; top: 6px; width: 12px; height: 12px; border-radius: 50%; background: #0b62bd; }

/* Taskbar */
.taskbar { height: 60px; flex: none; display: flex; align-items: center; color: #f2f2f2; background: linear-gradient(90deg, #1c2231 0, #1b2236 20%, #10205e 40%, #10205e 65%, #1b2236 80%, #1c2130 100%); }
.weather { width: 312px; padding-left: 27px; display: flex; align-items: center; flex: none; }
.wicon { width: 28px; height: 28px; }
.wtext { margin-left: 10px; font-size: 14px; line-height: 20px; }
.wdesc { color: #d8d8d8; }
.startcell { width: 55px; display: flex; justify-content: center; flex: none; }
.winlogo { width: 29px; height: 29px; }
.search { width: 273px; height: 38px; margin-left: 5px; border-radius: 19px; background: #f3f4f8; display: flex; align-items: center; padding-left: 14px; color: #555; font-size: 16px; flex: none; }
.search span { margin-left: 13px; }
.searchi { width: 18px; height: 18px; fill: none; stroke: #222; stroke-width: 1.600; }
.bing { width: 26px; height: 28px; margin-left: auto; margin-right: 8px; }
.apps { display: flex; margin-left: 3.500px; flex: none; }
.app-cell { width: 55px; height: 50px; display: flex; align-items: center; justify-content: center; position: relative; }
.appi { width: 30px; height: 30px; }
.wide32 { width: 32px; }
.narrow { width: 22px; }
.app-cell.on::before { content: ""; position: absolute; left: 2.500px; top: 0; width: 50px; height: 50px; border-radius: 5px; background: rgba(255,255,255,.08); border: 1px solid rgba(255,255,255,.05); }
.app-cell.on .appi { position: relative; }
.ind { position: absolute; left: 24px; top: 45px; width: 7px; height: 4px; border-radius: 2px; background: #9a9a9a; }
.ind.blue { left: 18px; width: 19px; background: #4cc2ff; }
.badge { position: absolute; left: 29px; top: 3px; width: 20px; height: 20px; border-radius: 50%; background: #fdbc11; }
.qmark { font: 700 24px "Liberation Sans", sans-serif; fill: #fff; }
.ailabel { font: 700 11px "Liberation Sans", sans-serif; fill: #123; }
.tray { display: flex; align-items: center; margin-left: 14.500px; flex: none; }
.tcell { width: 40px; display: flex; justify-content: center; }
.ti { fill: none; stroke: #f2f2f2; stroke-width: 1.400; }
.up .ti { width: 14px; height: 8px; stroke-width: 1.800; }
.micicon { width: 14px; height: 22px; stroke: #7fd4ea; }
.lang { width: 56px; text-align: center; font-size: 14.500px; line-height: 20px; }
.sys { display: flex; margin-left: 4px; }
.scell { width: 30px; display: flex; justify-content: center; }
.wf { width: 20px; height: 18px; stroke-width: 1.300; }
.dot { fill: #f2f2f2; stroke: none; }
.wf .solid { fill: #f2f2f2; }
.clock { width: 93px; text-align: right; font-size: 14.800px; line-height: 20px; white-space: nowrap; }
.bell { width: 38px; }
.bellicon { width: 20px; height: 22px; stroke: none; }
.bellicon .solid { fill: #f2f2f2; }
.zz { font: 700 8px "Liberation Sans", sans-serif; fill: #1c2130; stroke: none; }
.zz.sky { fill: #f2f2f2; }
```
